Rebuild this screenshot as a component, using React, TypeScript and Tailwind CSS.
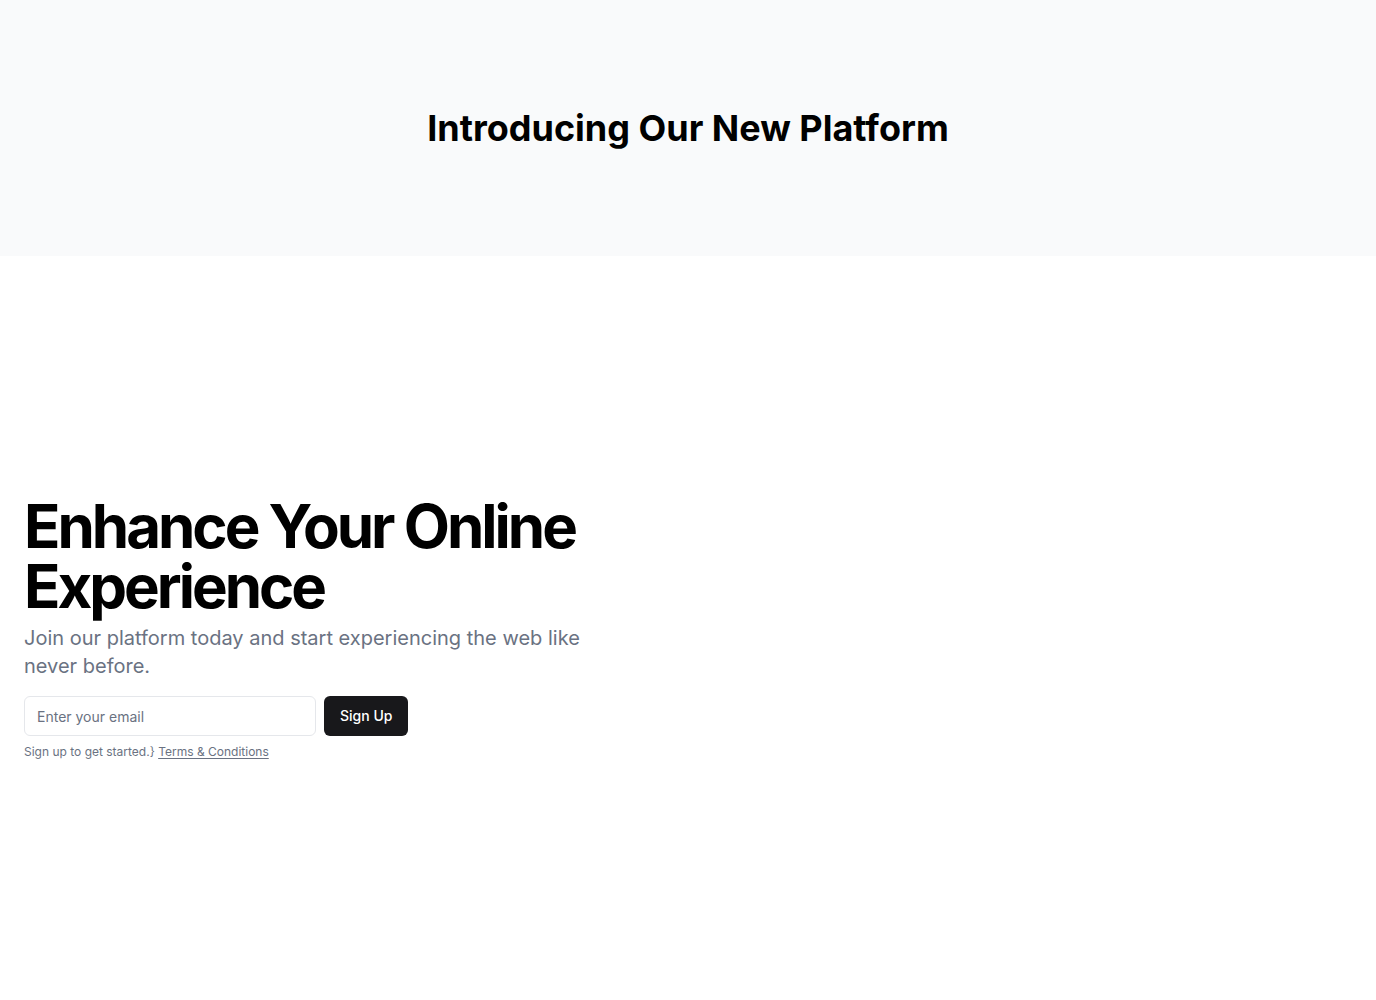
export default function App() {
  return (
    <div className="min-h-screen bg-white font-['Inter',sans-serif] text-black">
      {/* Top banner */}
      <header className="flex h-64 items-center justify-center bg-gray-50">
        <h2 className="text-4xl font-bold">Introducing Our New Platform</h2>
      </header>

      {/* Hero */}
      <section className="px-6 py-60">
        <div className="flex max-w-[600px] flex-col gap-4">
          <div className="flex flex-col gap-2">
            <h1 className="text-6xl font-bold tracking-tighter">Enhance Your Online Experience</h1>
            <p className="text-xl text-gray-500">
              Join our platform today and start experiencing the web like never before.
            </p>
          </div>
          <div className="flex flex-col gap-2">
            <form className="flex gap-2" onSubmit={(e) => e.preventDefault()}>
              <input
                type="email"
                placeholder="Enter your email"
                className="h-10 w-[292px] rounded-md border border-gray-200 px-3 text-sm placeholder:text-gray-500 focus:outline-none"
              />
              <button type="submit" className="h-10 rounded-md bg-[#18181b] px-4 text-sm font-medium text-white">
                Sign Up
              </button>
            </form>
            <p className="text-xs text-gray-500">
              Sign up to get started.{'}'}{' '}
              <a href="#" className="underline underline-offset-2">
                Terms &amp; Conditions
              </a>
            </p>
          </div>
        </div>
      </section>
    </div>
  )
}
